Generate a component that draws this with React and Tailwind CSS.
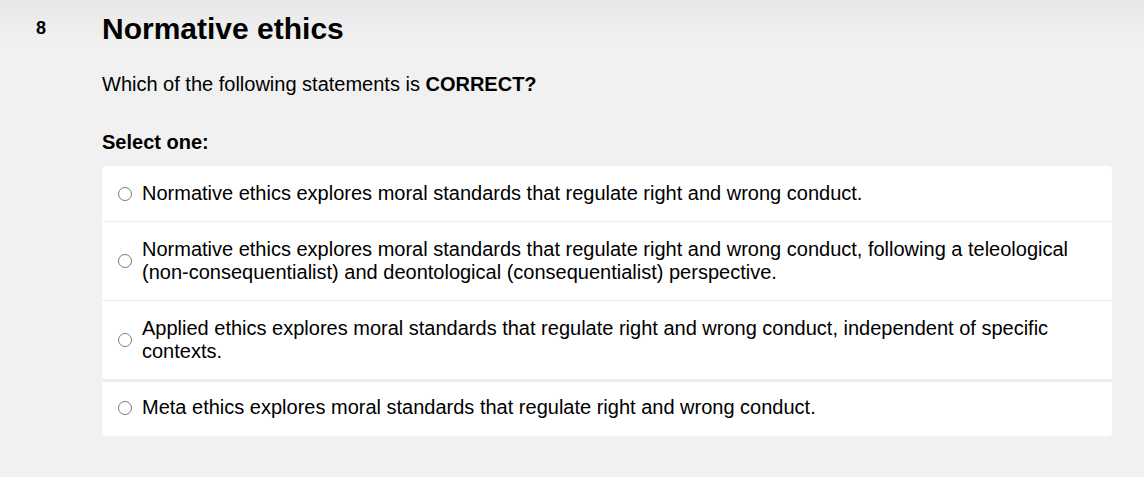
export default function App() {
  const opts = [
    "Normative ethics explores moral standards that regulate right and wrong conduct.",
    "Normative ethics explores moral standards that regulate right and wrong conduct, following a teleological (non-consequentialist) and deontological (consequentialist) perspective.",
    "Applied ethics explores moral standards that regulate right and wrong conduct, independent of specific contexts.",
    "Meta ethics explores moral standards that regulate right and wrong conduct.",
  ];
  return (
    <div
      className="w-[1144px] h-[477px] bg-[#f1f1f1] text-black overflow-hidden"
      style={{ fontFamily: '"Liberation Sans", Arial, sans-serif', backgroundImage: "linear-gradient(to bottom, #e8e8e8 0px, #f1f1f1 45px)" }}
    >
      <div className="flex">
        <div className="w-[102px] shrink-0 pl-[36px] pt-[17px] text-[18px] font-bold leading-[22px]">8</div>
        <div className="w-[1010px]">
          <h1 className="pt-[11px] text-[30px] font-bold leading-[36px]">Normative ethics</h1>
          <p className="mt-[26px] text-[20px] leading-[23px]">
            Which of the following statements is <b>CORRECT?</b>
          </p>
          <p className="mt-[35px] text-[20px] font-bold leading-[23px]">Select one:</p>
          <div className="mt-[12px] bg-white rounded-[4px]">
            {opts.map((t, i) => (
              <div
                key={i}
                className={
                  "flex items-center pl-[16px] pr-[40px] py-[16px] " +
                  (i === 1 ? "border-t border-[#eeeeee] " : "") +
                  (i === 2 ? "border-t border-[#eeeeee] " : "") +
                  (i === 3 ? "border-t-[3px] border-[#eeeeee] pt-[14px] pb-[17px] " : "")
                }
              >
                <span className="w-[14px] h-[14px] shrink-0 rounded-full border border-[#7a7a7a] bg-white" />
                <span className="ml-[10px] text-[20px] leading-[23px]">{t}</span>
              </div>
            ))}
          </div>
        </div>
      </div>
    </div>
  );
}
